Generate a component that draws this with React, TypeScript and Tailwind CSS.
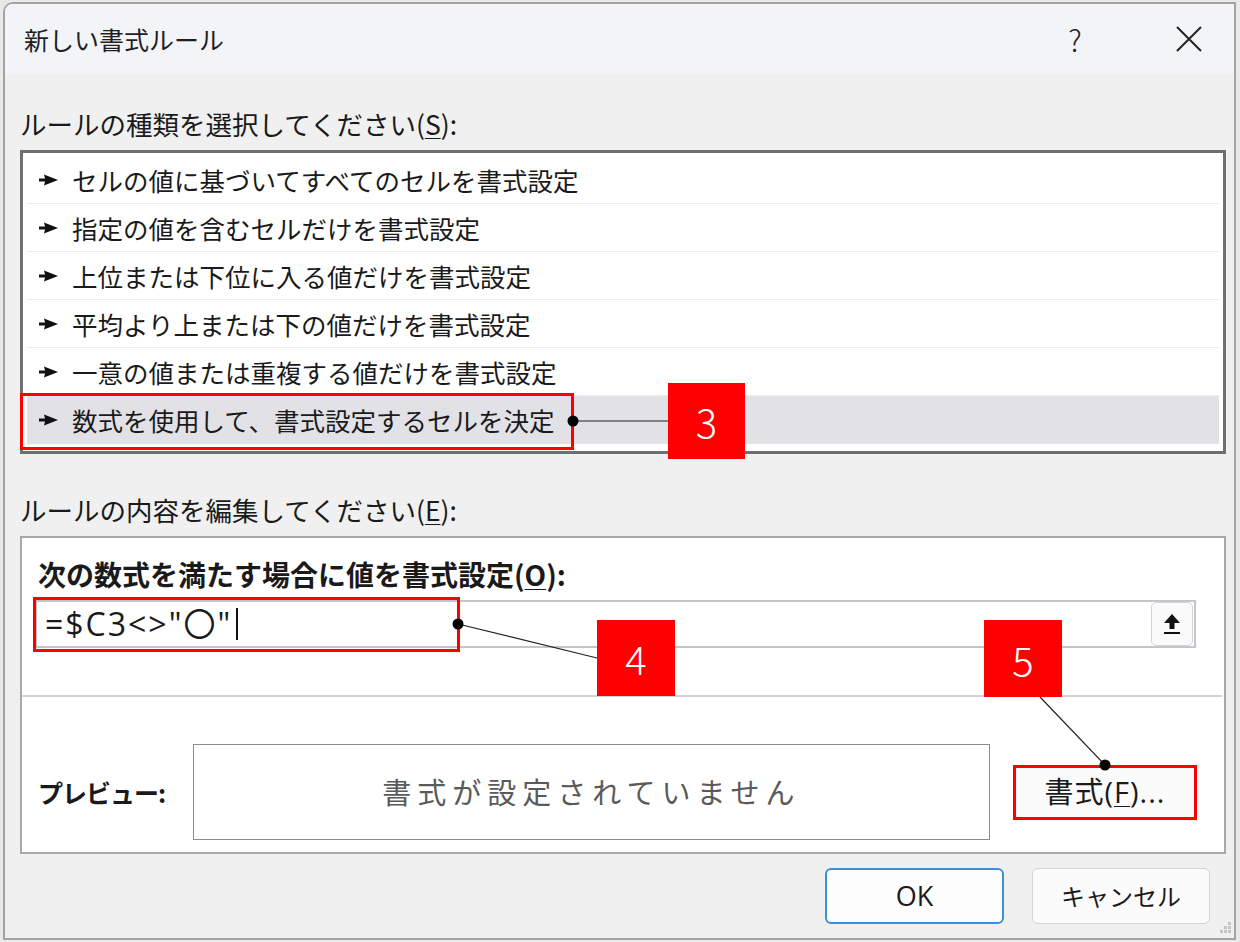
import type { ReactNode } from 'react';

const rules = [
  'セルの値に基づいてすべてのセルを書式設定',
  '指定の値を含むセルだけを書式設定',
  '上位または下位に入る値だけを書式設定',
  '平均より上または下の値だけを書式設定',
  '一意の値または重複する値だけを書式設定',
  '数式を使用して、書式設定するセルを決定',
];

const latin = { fontFamily: '"Open Sans", "Noto Sans CJK JP", sans-serif' };

function Pointer() {
  return (
    <svg width="19" height="12" viewBox="0 0 19 12" className="shrink-0">
      <path d="M0 4.5 L6 4.5 L5 0.5 L19 6 L5 11.5 L6 7.5 L0 7.5 Z" fill="#111" />
    </svg>
  );
}

function Key({ children }: { children: ReactNode }) {
  return <span className="underline underline-offset-[3px] decoration-1">{children}</span>;
}

function Badge({ n, className }: { n: string; className: string }) {
  return (
    <div
      className={`absolute flex items-center justify-center bg-[#ff0000] text-white text-[40px] font-light leading-none ${className}`}
    >
      {n}
    </div>
  );
}

export default function App() {
  return (
    <div
      className="relative w-[1240px] h-[942px] bg-[#e9e9e9] pl-[3px] pt-[2px] text-[#1a1a1a]"
      style={{ fontFamily: '"Noto Sans CJK JP", "Noto Sans", sans-serif' }}
    >
      <div className="w-[1233px] h-[938px] border-2 border-[#a3a3a3] rounded-tl-[10px] overflow-hidden bg-[#f0f0f0] flex flex-col">
        {/* title bar */}
        <div className="h-[70px] bg-[#f3f4f8] flex items-center pl-[19px] pr-[15px]">
          <span className="text-[25px] leading-none text-[#1f1f1f]">新しい書式ルール</span>
          <div className="flex-1" />
          <span className="w-[60px] text-center text-[30px] font-light leading-none text-[#222]">?</span>
          <div className="w-[54px]" />
          <div className="w-[60px] flex justify-center">
            <svg width="26" height="26" viewBox="0 0 26 26">
              <path d="M1 1 L25 25 M25 1 L1 25" stroke="#222" strokeWidth="2" />
            </svg>
          </div>
        </div>

        {/* body */}
        <div className="flex-1 pl-[15px] pr-[8px] flex flex-col">
          <div className="mt-[35px] h-[30px] text-[26.5px] leading-[30px]">
            ルールの種類を選択してください(<Key>S</Key>):
          </div>

          <div className="mt-[11px] h-[304px] border-[3px] border-[#6f6f6f] bg-white px-[4px] pt-[3px]">
            {rules.map((r, i) => (
              <div
                key={r}
                className={`h-[48px] flex items-center gap-[14px] pl-[12px] text-[25.5px] leading-none ${
                  i === rules.length - 1 ? 'bg-[#e1e1e6]' : 'border-b border-[#ececec]'
                }`}
              >
                <Pointer />
                <span>{r}</span>
              </div>
            ))}
          </div>

          <div className="mt-[41px] h-[30px] text-[26.5px] leading-[30px]">
            ルールの内容を編集してください(<Key>E</Key>):
          </div>

          <div className="mt-[11px] h-[318px] border-2 border-[#a9a9a9] bg-white flex flex-col">
            <div className="mt-[21px] pl-[16px] h-[30px] text-[28px] leading-[30px] font-bold">
              次の数式を満たす場合に値を書式設定(<Key>O</Key>):
            </div>
            <div className="mt-[11px] ml-[13px] mr-[28px] h-[48px] border-2 border-[#c4c4cc] flex items-center pl-[8px] pr-[1px]">
              <span className="text-[32px] tracking-[2px] leading-none" style={latin}>
                =$C3&lt;&gt;"〇"
              </span>
              <span className="ml-[4px] w-[1.5px] h-[32px] bg-[#111]" />
              <div className="flex-1" />
              <div className="w-[42px] h-[44px] rounded-[5px] border border-[#d4d4d4] bg-[#fafafa] flex items-center justify-center">
                <svg width="20" height="22" viewBox="0 0 20 22">
                  <path d="M10 1 L18 10 L12.5 10 L12.5 16 L7.5 16 L7.5 10 L2 10 Z" fill="#111" />
                  <rect x="2" y="19" width="16" height="2" fill="#111" />
                </svg>
              </div>
            </div>
            <div className="mt-[47px] h-[2px] bg-[#d2d2d6] mr-[2px]" />
            <div className="mt-[47px] flex items-center pl-[16px]">
              <span className="w-[155px] text-[25px] font-bold tracking-[-1px] leading-none">プレビュー:</span>
              <div className="w-[797px] h-[96px] border border-[#8c8c8c] flex items-center justify-center text-[29px] tracking-[6px] text-[#5a5a5a]">
                書式が設定されていません
              </div>
              <div
                className="ml-[23px] w-[184px] h-[55px] bg-[#fbfbfb] border border-[#d0d0d0] flex items-center justify-center text-[29px] tracking-[1px]"
                style={latin}
              >
                書式(<Key>F</Key>)...
              </div>
            </div>
          </div>

          <div className="mt-[14px] flex justify-end gap-[28px] pr-[16px]">
            <div
              className="w-[179px] h-[56px] rounded-[6px] border-2 border-[#3c8fdc] bg-[#fdfdfd] flex items-center justify-center text-[27px]"
              style={latin}
            >
              OK
            </div>
            <div className="w-[178px] h-[56px] rounded-[6px] border border-[#d3d3d3] bg-[#fbfbfb] flex items-center justify-center text-[24px]">
              キャンセル
            </div>
          </div>
        </div>
      </div>

      {/* annotations */}
      <div className="absolute left-[20px] top-[393px] w-[554px] h-[57px] border-[3px] border-[#ff0000]" />
      <div className="absolute left-[33px] top-[597px] w-[427px] h-[55px] border-[3px] border-[#ff0000]" />
      <div className="absolute left-[1013px] top-[765px] w-[184px] h-[55px] border-[3px] border-[#ff0000]" />

      <svg className="absolute left-0 top-0" width="1240" height="942">
        <line x1="573" y1="421" x2="668" y2="421" stroke="#222" strokeWidth="1.2" />
        <circle cx="573" cy="421" r="5.5" fill="#000" />
        <line x1="458" y1="624" x2="597" y2="658" stroke="#222" strokeWidth="1.2" />
        <circle cx="458" cy="624" r="5.5" fill="#000" />
        <line x1="1040" y1="697" x2="1105" y2="765" stroke="#222" strokeWidth="1.2" />
        <circle cx="1105" cy="765" r="5.5" fill="#000" />
        <g fill="#c4c4c4">
          <rect x="1228" y="922" width="3" height="3" />
          <rect x="1224" y="926" width="3" height="3" />
          <rect x="1228" y="926" width="3" height="3" />
          <rect x="1220" y="930" width="3" height="3" />
          <rect x="1224" y="930" width="3" height="3" />
          <rect x="1228" y="930" width="3" height="3" />
        </g>
      </svg>

      <Badge n="3" className="left-[668px] top-[383px] w-[77px] h-[76px]" />
      <Badge n="4" className="left-[597px] top-[620px] w-[78px] h-[76px]" />
      <Badge n="5" className="left-[984px] top-[620px] w-[78px] h-[77px]" />
    </div>
  );
}
